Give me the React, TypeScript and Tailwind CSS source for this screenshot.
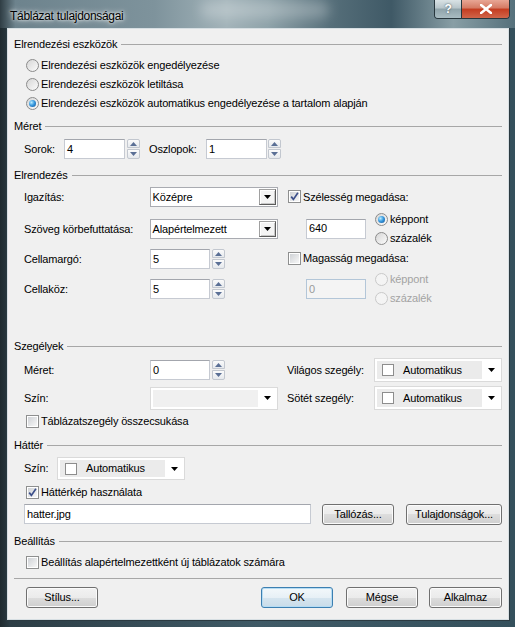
import React from 'react';

function Tri({ color = '#000' }: { color?: string }) {
  return (
    <svg width="7" height="4" viewBox="0 0 7 4">
      <path d="M0 0h7L3.5 4z" fill={color} />
    </svg>
  );
}

function Heading({ label }: { label: string }) {
  return (
    <div className="flex items-center h-4">
      <span>{label}</span>
      <div className="flex-1 h-px ml-[4px] bg-[#a7a7a7]" />
    </div>
  );
}

function Radio({ label, checked, disabled }: { label: string; checked?: boolean; disabled?: boolean }) {
  return (
    <div className="flex items-center h-4">
      <span
        className={
          disabled
            ? 'w-[13px] h-[13px] rounded-full border border-[#c9c9c9] bg-[#f4f4f4] flex items-center justify-center'
            : 'w-[13px] h-[13px] rounded-full border border-[#8b8b8b] bg-[linear-gradient(135deg,#d6d6d6,#fbfbfb)] flex items-center justify-center'
        }
      >
        {checked && (
          <span className="w-[7px] h-[7px] rounded-full bg-[radial-gradient(circle_at_35%_35%,#b9ecff_0%,#3a9be0_45%,#0c4f94_100%)]" />
        )}
      </span>
      <span className={disabled ? 'ml-[2px] text-[#a3a3a3]' : 'ml-[2px]'}>{label}</span>
    </div>
  );
}

function Check({ label, checked }: { label: string; checked?: boolean }) {
  return (
    <div className="flex items-center h-4">
      <span className="w-[13px] h-[13px] border border-[#8e8f8f] bg-white p-px flex">
        <span className="flex-1 bg-[linear-gradient(135deg,#cfd2d6,#f7f7f7)] flex items-center justify-center">
          {checked && (
            <svg width="9" height="9" viewBox="0 0 9 9">
              <path d="M1.2 4.6L3.4 7.4L7.9 0.8" stroke="#3c4f8a" strokeWidth="1.7" fill="none" />
            </svg>
          )}
        </span>
      </span>
      <span className="ml-[2px]">{label}</span>
    </div>
  );
}

function Input({ value, w, disabled }: { value: string; w: string; disabled?: boolean }) {
  return (
    <div
      className={
        disabled
          ? `${w} h-[20px] border border-[#b3c6d8] bg-[#f4f4f4] text-[#9a9a9a] flex items-center pl-[2px]`
          : `${w} h-[20px] border border-[#c6cad2] border-t-[#a3a6ad] bg-white flex items-center pl-[2px]`
      }
    >
      {value}
    </div>
  );
}

function Spin() {
  return (
    <div className="flex flex-col w-[13px] h-[20px] gap-px">
      <div className="h-[9px] border border-[#c2c7cf] rounded-t-[2px] bg-[linear-gradient(#fbfbfb,#e6e9ed)] flex items-center justify-center">
        <svg width="7" height="4" viewBox="0 0 7 4">
          <path d="M0 4h7L3.5 0z" fill="#5a6f95" />
        </svg>
      </div>
      <div className="h-[10px] border border-[#c2c7cf] rounded-b-[2px] bg-[linear-gradient(#fbfbfb,#e6e9ed)] flex items-center justify-center">
        <Tri color="#5a6f95" />
      </div>
    </div>
  );
}

function Select({ value }: { value: string }) {
  return (
    <div className="w-[129px] h-[20px] border border-[#a9abb1] bg-white flex items-center">
      <span className="flex-1 pl-[2px]">{value}</span>
      <span className="w-[17px] h-[16px] mr-[1px] border border-[#5a5a5a] border-t-[#a0a0a0] border-l-[#a0a0a0] bg-[#f4f4f4] shadow-[inset_1px_1px_0_#ffffff,inset_-1px_-1px_0_#c8c8c8] flex items-center justify-center">
        <Tri />
      </span>
    </div>
  );
}

function ColorSelect({ w, h, label, disabled }: { w: string; h: string; label?: string; disabled?: boolean }) {
  return (
    <div className={`${w} ${h} border border-[#dadada] bg-white flex items-stretch py-[2px] pl-[2px]`}>
      <div className={disabled ? 'flex-1 bg-[#f0f0f0] flex items-center' : 'flex-1 bg-[#ebebeb] flex items-center'}>
        {label && (
          <>
            <span className="w-[12px] h-[12px] ml-[5px] border border-[#8d8d8d] bg-white" />
            <span className="ml-[9px]">{label}</span>
          </>
        )}
      </div>
      <span className="w-[19px] flex items-center justify-center">
        <Tri />
      </span>
    </div>
  );
}

function Btn({ label, w, primary }: { label: string; w: string; primary?: boolean }) {
  return (
    <div
      className={
        primary
          ? `${w} h-[21px] rounded-[3px] border border-[#3c7fb1] bg-[linear-gradient(#f3f8fb,#e7f0f6_50%,#d6e5ef_50%,#c9dce9)] shadow-[inset_0_0_0_1px_#b6dcf3] flex items-center justify-center`
          : `${w} h-[21px] rounded-[3px] border border-[#707070] bg-[linear-gradient(#f2f2f2,#ebebeb_50%,#dddddd_50%,#cfcfcf)] shadow-[inset_0_0_0_1px_#fbfbfb] flex items-center justify-center`
      }
    >
      {label}
    </div>
  );
}

export default function App() {
  return (
    <div className="relative w-[515px] h-[627px] overflow-hidden bg-[linear-gradient(90deg,#1f2a2f_0%,#2c3d45_2%,#3f5a66_50%,#34505c_100%)] font-['Liberation_Sans',Arial,sans-serif] text-[11px] tracking-[-0.15px] text-black">
      {/* Title bar */}
      <div className="relative h-[28px] overflow-hidden bg-[linear-gradient(90deg,#2f3d44_0%,#6d838d_3%,#7e939c_30%,#a2b3b9_44%,#8ea2a9_52%,#566f7a_64%,#3f5966_76%,#889ea5_88%,#55707b_100%)]">
        <div className="absolute left-[200px] top-[2px] w-[130px] h-[16px] rounded-full bg-white/25 blur-[6px]" />
        <span className="absolute left-[10px] top-[7px] text-[12px] tracking-[-0.3px] text-black [text-shadow:0_0_6px_#ffffff,0_0_3px_#ffffff]">
          Táblázat tulajdonságai
        </span>
        <div className="absolute right-[5px] top-0 flex h-[19px] border border-t-0 border-[#27363d] rounded-b-[4px] overflow-hidden">
          <div className="w-[27px] bg-[linear-gradient(#d9e2e5,#b7c5ca_45%,#8fa3aa_50%,#a9bcc2)] border-r border-[#27363d] flex items-center justify-center text-white font-bold text-[12px] [text-shadow:0_0_2px_#33464f]">
            ?
          </div>
          <div className="w-[47px] bg-[linear-gradient(#e8a695,#d47a63_45%,#c43c20_50%,#d0654a)] flex items-center justify-center">
            <svg width="12" height="10" viewBox="0 0 12 10">
              <path d="M1 1L11 9M11 1L1 9" stroke="#ffffff" strokeWidth="2.6" strokeLinecap="square" />
            </svg>
          </div>
        </div>
      </div>

      {/* Client */}
      <div className="ml-[7px] w-[502px] h-[592px] border border-[#d7dfe3] shadow-[0_0_0_1px_#2b3a41] bg-[#f0f0f0] px-[6px] flex flex-col">
        <div className="mt-[7px]">
          <Heading label="Elrendezési eszközök" />
        </div>
        <div className="mt-[5px] pl-[12px]">
          <Radio label="Elrendezési eszközök engedélyezése" />
        </div>
        <div className="mt-[3px] pl-[12px]">
          <Radio label="Elrendezési eszközök letiltása" />
        </div>
        <div className="mt-[3px] pl-[12px]">
          <Radio label="Elrendezési eszközök automatikus engedélyezése a tartalom alapján" checked />
        </div>

        <div className="mt-[7px]">
          <Heading label="Méret" />
        </div>
        <div className="mt-[5px] h-[20px] pl-[10px] flex items-center">
          <span className="w-[40px]">Sorok:</span>
          <Input value="4" w="w-[61px]" />
          <div className="ml-[2px]">
            <Spin />
          </div>
          <span className="ml-[9px] w-[57px]">Oszlopok:</span>
          <Input value="1" w="w-[61px]" />
          <div className="ml-[1px]">
            <Spin />
          </div>
        </div>

        <div className="mt-[8px]">
          <Heading label="Elrendezés" />
        </div>
        <div className="mt-[4px] h-[119px] flex">
          <div className="w-[264px] pl-[10px] flex flex-col">
            <div className="h-[20px] flex items-center">
              <span className="w-[126px]">Igazítás:</span>
              <Select value="Középre" />
            </div>
            <div className="mt-[12px] h-[20px] flex items-center">
              <span className="w-[126px]">Szöveg körbefuttatása:</span>
              <Select value="Alapértelmezett" />
            </div>
            <div className="mt-[10px] h-[20px] flex items-center">
              <span className="w-[126px]">Cellamargó:</span>
              <Input value="5" w="w-[60px]" />
              <div className="ml-[2px]">
                <Spin />
              </div>
            </div>
            <div className="mt-[10px] h-[20px] flex items-center">
              <span className="w-[126px]">Cellaköz:</span>
              <Input value="5" w="w-[60px]" />
              <div className="ml-[2px]">
                <Spin />
              </div>
            </div>
          </div>
          <div className="flex-1 pl-[10px] flex flex-col">
            <div className="h-[20px] flex items-center">
              <Check label="Szélesség megadása:" checked />
            </div>
            <div className="mt-[5px] h-[34px] pl-[18px] flex items-center">
              <Input value="640" w="w-[60px]" />
              <div className="ml-[9px] flex flex-col gap-[3px]">
                <Radio label="képpont" checked />
                <Radio label="százalék" />
              </div>
            </div>
            <div className="mt-[3px] h-[20px] flex items-center">
              <Check label="Magasság megadása:" />
            </div>
            <div className="mt-[4px] h-[34px] pl-[18px] flex items-center">
              <Input value="0" w="w-[60px]" disabled />
              <div className="ml-[9px] flex flex-col gap-[3px]">
                <Radio label="képpont" disabled />
                <Radio label="százalék" disabled />
              </div>
            </div>
          </div>
        </div>

        <div className="mt-[32px]">
          <Heading label="Szegélyek" />
        </div>
        <div className="mt-[4px] h-[24px] flex items-center">
          <div className="w-[264px] pl-[10px] flex items-center">
            <span className="w-[126px]">Méret:</span>
            <Input value="0" w="w-[60px]" />
            <div className="ml-[2px]">
              <Spin />
            </div>
          </div>
          <div className="flex-1 pl-[9px] flex items-center">
            <span className="w-[87px]">Világos szegély:</span>
            <ColorSelect w="w-[128px]" h="h-[24px]" label="Automatikus" />
          </div>
        </div>
        <div className="mt-[4px] h-[24px] flex items-center">
          <div className="w-[264px] pl-[10px] flex items-center">
            <span className="w-[126px]">Szín:</span>
            <ColorSelect w="w-[129px]" h="h-[23px]" disabled />
          </div>
          <div className="flex-1 pl-[9px] flex items-center">
            <span className="w-[87px]">Sötét szegély:</span>
            <ColorSelect w="w-[128px]" h="h-[24px]" label="Automatikus" />
          </div>
        </div>
        <div className="mt-[3px] pl-[12px]">
          <Check label="Táblázatszegély összecsukása" />
        </div>

        <div className="mt-[8px]">
          <Heading label="Háttér" />
        </div>
        <div className="mt-[4px] h-[23px] pl-[10px] flex items-center">
          <span className="w-[33px]">Szín:</span>
          <ColorSelect w="w-[128px]" h="h-[23px]" label="Automatikus" />
        </div>
        <div className="mt-[4px] pl-[12px]">
          <Check label="Háttérkép használata" checked />
        </div>
        <div className="mt-[4px] h-[20px] pl-[10px] flex items-center">
          <Input value="hatter.jpg" w="w-[287px]" />
          <div className="ml-[11px]">
            <Btn label="Tallózás..." w="w-[72px]" />
          </div>
          <div className="ml-[12px]">
            <Btn label="Tulajdonságok..." w="w-[96px]" />
          </div>
        </div>

        <div className="mt-[9px]">
          <Heading label="Beállítás" />
        </div>
        <div className="mt-[5px] pl-[12px]">
          <Check label="Beállítás alapértelmezettként új táblázatok számára" />
        </div>
        <div className="mt-[8px] h-px bg-[#a7a7a7]" />
        <div className="mt-[8px] h-[21px] pl-[12px] flex items-center">
          <Btn label="Stílus..." w="w-[72px]" />
          <div className="ml-auto flex items-center">
            <Btn label="OK" w="w-[72px]" primary />
            <div className="ml-[13px]">
              <Btn label="Mégse" w="w-[72px]" />
            </div>
            <div className="ml-[11px]">
              <Btn label="Alkalmaz" w="w-[73px]" />
            </div>
          </div>
        </div>
      </div>
    </div>
  );
}
